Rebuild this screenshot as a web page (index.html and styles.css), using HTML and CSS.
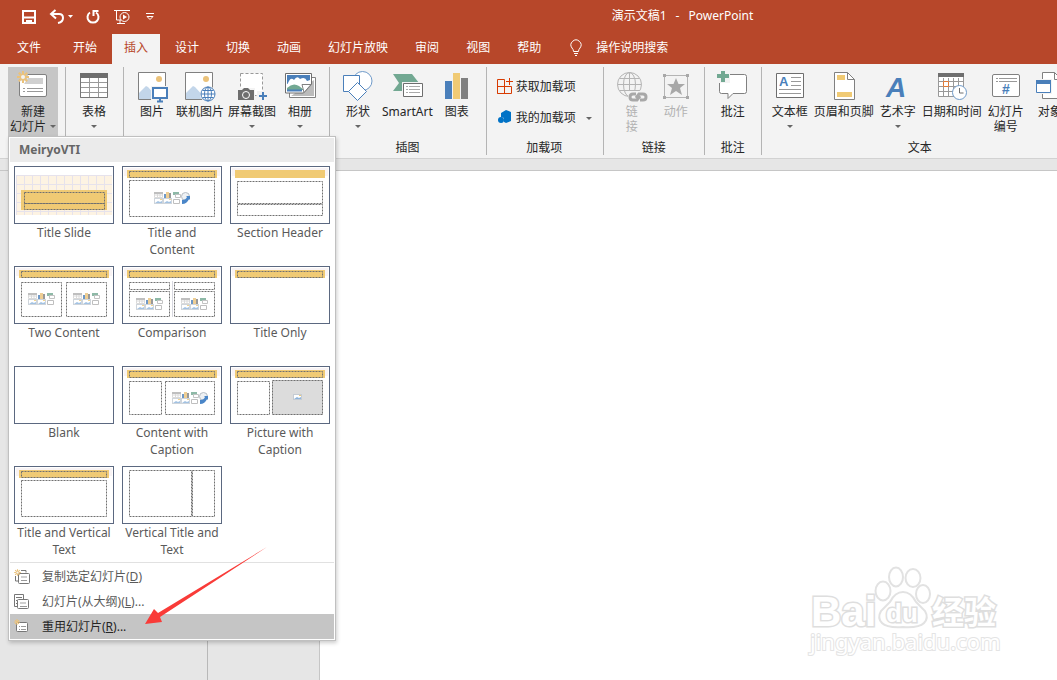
FILE: index.html
```html
<!DOCTYPE html>
<html lang="zh-CN">
<head>
<meta charset="utf-8">
<title>演示文稿1 - PowerPoint</title>
<link rel="stylesheet" href="styles.css">
</head>
<body>

<svg class="defs" width="0" height="0" aria-hidden="true">
	<defs>
		<pattern id="grid" width="8" height="9" patternUnits="userSpaceOnUse" x="2" y="9">
			<path d="M0 .5H8M.5 0V9" stroke="#e6e2ec" fill="none"/>
		</pattern>
		<g id="bar">
			<rect x="2" y="2" width="96" height="8" fill="#f8f3f4"/>
			<rect x="5" y="4" width="90" height="8" fill="#f0ca74"/>
		</g>
		<g id="bar-dots">
			<use href="#bar"/>
			<rect class="dot" x="7.500" y="5.500" width="85" height="6"/>
		</g>
		<g id="pic">
			<rect x=".5" y=".5" width="8" height="5" fill="#fff" stroke="#c4cbd3"/>
			<path d="M1 5l3-2 2 1 2-1v2z" fill="#8db4dc"/>
			<path d="M6 1h2v1H6z" fill="#f0ca74"/>
		</g>
		<g id="six" opacity=".8">
			<path d="M.5.5h8v5h-8zM.5 3h8M3.500 1v5M6 1v5" stroke="#d2d2d2" fill="#fff"/>
			<path d="M0 0h9v2H0z" fill="#b0b0b0"/>
			<path d="M10 2h2v4h-2z" fill="#4a7fba"/><path d="M12 0h3v6h-3z" fill="#ebc27a"/><path d="M15 1h2v5h-2z" fill="#808080"/>
			<path d="M19 0h6v3h-6z" fill="#72a892"/><path d="M21.500 2.500h5v3h-5z" stroke="#b5b5b5" fill="#fff"/>
			<use href="#pic" y="6"/><use href="#pic" x="9" y="6"/>
			<path d="M19.500 7.500h6v4h-6z" stroke="#b0b0b0" fill="#fff"/>
		</g>
		<g id="eight">
			<use href="#six"/>
			<circle cx="31.500" cy="4.500" r="4" stroke="#b5bcc4" fill="#eef1f4"/>
			<path d="M28 8q4 0 5-3l-1-1 4 0v4l-1-1q-2 5-7 5z" fill="#4a86c8"/>
		</g>
		<g id="sun">
			<path d="M0-6V6M-6 0H6M-4.200-4.200L4.200 4.200M-4.200 4.200L4.200-4.200" stroke="#ebc27a" stroke-width="2"/>
			<circle r="2" fill="#f3f3f3"/>
		</g>
		<g id="photo">
			<path d="M1.500 1.500h27v27h-27z" fill="#fff" stroke="#808080"/>
			<circle cx="22" cy="8" r="3" fill="#ebc27a"/>
			<path d="M2 22l7-7 2 1 11 12H2z" fill="#c3d6ea"/>
		</g>
	</defs>
</svg>

<div class="app">
	<header class="header">
		<div class="titlebar">
			<div class="quick">
				<button aria-label="保存"><svg width="16" height="16"><path d="M2 2h12v12H2zM2 8.500h12" fill="none" stroke="#fff" stroke-width="2"/><path d="M5 11h6v4H9v-2H7v2H5z" fill="#fff"/></svg></button>
				<button aria-label="撤消"><svg width="24" height="16"><path d="M2 5h8q4 0 4 4t-5 5M6.500 1L2 5l5 4.500" fill="none" stroke="#fff" stroke-width="2"/><path d="M19 6h5l-2.500 3z" fill="#fff"/></svg></button>
				<button aria-label="重复"><svg width="16" height="16"><path d="M5 3.500a5.500 5.500 0 1 0 6 0" fill="none" stroke="#fff" stroke-width="2"/><path d="M8.500 7V2h5" fill="none" stroke="#fff" stroke-width="2"/></svg></button>
				<button aria-label="从头开始"><svg width="20" height="16"><path d="M1 1.500h16M3.500 2v9H8M7 11v4M4 14.500h8" fill="none" stroke="#fff"/><circle cx="11.500" cy="8" r="4.500" fill="none" stroke="#fff"/><path d="M10 5.500l4 2.500-4 2.500z" fill="#fff"/></svg></button>
				<button aria-label="自定义快速访问工具栏"><svg width="10" height="16"><path d="M1 4.500h8M2 7.500h6l-3 3z" fill="none" stroke="#fff"/></svg></button>
			</div>
			<div class="doc-title"><span>演示文稿1</span><span>-</span><span>PowerPoint</span></div>
		</div>
		<nav class="tabs">
			<button class="tab file">文件</button>
			<button class="tab">开始</button>
			<button class="tab active">插入</button>
			<button class="tab">设计</button>
			<button class="tab">切换</button>
			<button class="tab">动画</button>
			<button class="tab">幻灯片放映</button>
			<button class="tab">审阅</button>
			<button class="tab">视图</button>
			<button class="tab">帮助</button>
			<button class="tab tell">
				<svg width="16" height="18"><path d="M5.500 12.500q0-2-1.500-3.500a5 5 0 1 1 8 0q-1.500 1.500-1.500 3.500zM6 14.500h4M7 16.500h2" fill="none" stroke="#fff"/></svg>
				操作说明搜索
			</button>
		</nav>
	</header>

	<div class="ribbon">
		<section class="group slides">
			<div class="tools">
				<button class="tool pressed">
					<svg width="32" height="32"><rect x="2.500" y="3.500" width="27" height="22" rx="1.500" fill="#fff" stroke="#808080"/><path d="M11 7h15v6H7z" fill="#d0d0d0"/><path d="M6 17.500h2m2 0h16M6 20.500h2m2 0h16" stroke="#999"/><circle cx="6" cy="5" r="5" fill="#c6c6c6"/><use href="#sun" x="6" y="6"/></svg>
					<span>新建<br>幻灯片<i class="caret side"></i></span>
				</button>
			</div>
		</section>
		<section class="group">
			<div class="tools">
				<button class="tool">
					<svg width="32" height="32"><path d="M2.500 2.500h27v24h-27zM3 11.500h26M3 16.500h26M3 21.500h26M11.500 7v19M20.500 7v19" fill="#fff" stroke="#999"/><path d="M2.500 2.500h27v24h-27z" fill="none" stroke="#777"/><path d="M2 2h28v5H2z" fill="#6e6e6e"/></svg>
					<span>表格</span><i class="caret"></i>
				</button>
			</div>
			<h2>表格</h2>
		</section>
		<section class="group">
			<div class="tools">
				<button class="tool">
					<svg width="32" height="32"><use href="#photo" x="1"/><path d="M15 15h17v15H15z" fill="#f3f3f3"/><path d="M17 17h14v10H17z" fill="#fff" stroke="#4a7fba" stroke-width="2"/><path d="M24 28v2M21 30.500h6" stroke="#4a7fba" stroke-width="2"/></svg>
					<span>图片</span>
				</button>
				<button class="tool">
					<svg width="32" height="32"><use href="#photo"/><circle cx="24" cy="23" r="8" fill="#f3f3f3"/><circle cx="24" cy="23" r="7" fill="#fff" stroke="#4a7fba"/><ellipse cx="24" cy="23" rx="3.500" ry="7" fill="none" stroke="#4a7fba"/><path d="M24 16v14M17 23h14M18.500 19.500h11M18.500 26.500h11" stroke="#4a7fba"/></svg>
					<span>联机图片</span>
				</button>
				<button class="tool">
					<svg width="32" height="32"><path d="M4.500 2.500h22v22h-22z" fill="#fff" stroke="#999" stroke-dasharray="3 2"/><path d="M1 17h18v13H1z" fill="#f3f3f3"/><path d="M2 19h4l2-2h4l2 2h4v10H2z" fill="#6e6e6e"/><circle cx="10" cy="24" r="3.500" fill="none" stroke="#fff"/><path d="M21 20h10v10H21z" fill="#f3f3f3"/><path d="M27 21v8M23 25h8" stroke="#4a7fba" stroke-width="2"/></svg>
					<span>屏幕截图</span><i class="caret"></i>
				</button>
				<button class="tool">
					<svg width="32" height="32"><path d="M5.500 6.500h26v20h-26z" fill="#fff" stroke="#808080"/><path d="M7 25l23-16v16z" fill="#bbb"/><path d="M1.500 2.500h26v11l-8 8.500h-18z" fill="#fff" stroke="#6e6e6e"/><path d="M3 4h23v9H3z" fill="#4a7fba"/><path d="M5 10q2-4 5-1 3-5 6-1 5-3 7 2l3-1v5H3z" fill="#fff"/><path d="M3 17q6-6 12-2l5 4H3z" fill="#72a892"/><path d="M3 19.500h15" stroke="#4a7fba" stroke-width="2"/><path d="M27 13.500h-9l2 8z" fill="#fff" stroke="#808080"/></svg>
					<span>相册</span><i class="caret"></i>
				</button>
			</div>
			<h2>图像</h2>
		</section>
		<section class="group">
			<div class="tools">
				<button class="tool">
					<svg width="32" height="32"><circle cx="20.500" cy="10" r="9.500" fill="#fff" stroke="#6f9ac9"/><path d="M1.500 4.500h16v16h-16z" fill="#fff" stroke="#4a7fba"/><path d="M15.500 11.500l9 9-9 9-9-9z" fill="#fff" stroke="#4a7fba"/></svg>
					<span>形状</span><i class="caret"></i>
				</button>
				<button class="tool">
					<svg width="32" height="32"><path d="M2 3h19l7 9-7 8H2l6-8z" fill="#72a892"/><path d="M11 11h21v16H11z" fill="#f3f3f3"/><path d="M12.500 12.500h19v13h-19z" fill="#fff" stroke="#6e6e6e"/><path d="M15 15.500h2m1 0h11M15 18.500h2m1 0h11M15 21.500h2m1 0h11" stroke="#aaa"/></svg>
					<span>SmartArt</span>
				</button>
				<button class="tool">
					<svg width="32" height="32"><path d="M4 10h7v18H4z" fill="#4a7fba"/><path d="M12 2h7v26h-7z" fill="#f0ca74"/><path d="M20 7h7v21h-7z" fill="#808080"/></svg>
					<span>图表</span>
				</button>
			</div>
			<h2>插图</h2>
		</section>
		<section class="group">
			<div class="tools stack">
				<button class="row-tool">
					<svg width="16" height="16"><path d="M.5 1.500h7v14h-7zM.5 8.500h14v7H.5M7.500 8.500v7M12.500 0v7M9 3.500h7" fill="none" stroke="#d83b01"/></svg>
					获取加载项
				</button>
				<button class="row-tool">
					<svg width="16" height="16"><path d="M9 1l5 2v9l-5 2-2-1V9L4 8V4z" fill="#0072c6"/><circle cx="4" cy="11" r="3" fill="#0072c6"/></svg>
					我的加载项<i class="caret"></i>
				</button>
			</div>
			<h2>加载项</h2>
		</section>
		<section class="group narrow">
			<div class="tools">
				<button class="tool" disabled>
					<svg width="32" height="32"><g fill="none" stroke="#b4b4b4"><circle cx="13.500" cy="13.500" r="12"/><ellipse cx="13.500" cy="13.500" rx="6" ry="12"/><path d="M13.500 1.500v24M1.500 13.500h24M3.500 7.500h20M3.500 19.500h20"/></g><path d="M12 20h20v12H12z" fill="#f3f3f3"/><g fill="none" stroke="#a8a8a8" stroke-width="3"><path d="M20 23h-3q-3 0-3 3t3 3h4l3-4"/><path d="M24 29h3q3 0 3-3t-3-3h-4l-3 4"/></g></svg>
					<span>链<br>接</span>
				</button>
				<button class="tool" disabled>
					<svg width="32" height="32"><path d="M4.500 4.500h23v22h-23z" fill="none" stroke="#b4b4b4"/><path d="M3 3h3v3H3zM26 3h3v3h-3zM3 25h3v3H3zM26 25h3v3h-3zM16 7l2.500 6H25l-5 4 2 7-6-4-6 4 2-7-5-4h6.500z" fill="#a8a8a8"/></svg>
					<span>动作</span>
				</button>
			</div>
			<h2>链接</h2>
		</section>
		<section class="group narrow">
			<div class="tools">
				<button class="tool">
					<svg width="32" height="32"><path d="M4.500 3.500h23q2 0 2 2v15q0 2-2 2H16l-5 5v-5H4.500q-2 0-2-2v-15q0-2 2-2z" fill="#fff" stroke="#808080"/><path d="M0-2h13v14H0z" fill="#f3f3f3"/><path d="M6-1v12M0 5h12" stroke="#72a892" stroke-width="4"/></svg>
					<span>批注</span>
				</button>
			</div>
			<h2>批注</h2>
		</section>
		<section class="group text">
			<div class="tools">
				<button class="tool">
					<svg width="32" height="32"><path d="M2.500 2.500h27v24h-27z" fill="#fff" stroke="#6e6e6e"/><path d="M17 6.500h10M17 10.500h10M17 14.500h10M5 18.500h22M5 22.500h22" stroke="#999"/><text class="glyph" x="5" y="15" font-size="13">A</text></svg>
					<span>文本框</span><i class="caret"></i>
				</button>
				<button class="tool">
					<svg width="32" height="32"><path d="M6.500 1.500h13l7 7v20h-20z" fill="#fff" stroke="#808080"/><path d="M19.500 1.500v7h7" fill="none" stroke="#808080"/><path d="M9 4h8v5H9zM9 21h15v5H9z" fill="#f0ca74"/></svg>
					<span>页眉和页脚</span>
				</button>
				<button class="tool">
					<svg width="32" height="32"><text class="glyph slant" x="4" y="26" font-size="28">A</text></svg>
					<span>艺术字</span><i class="caret"></i>
				</button>
				<button class="tool">
					<svg width="32" height="32"><path d="M2.500 2.500h25v23h-25zM3 10.500h24M3 15.500h24M3 20.500h24M7.500 7v18M12.500 7v18M17.500 7v18M22.500 7v18" fill="#fff" stroke="#999"/><path d="M2 2h26v4H2z" fill="#6e6e6e"/><path d="M7.500 10.500h5v5h-5z" fill="#fff" stroke="#e07b39"/><circle cx="23.500" cy="21.500" r="7" fill="#fff" stroke="#6f9ac9"/><path d="M23.500 17v5h4" fill="none" stroke="#6e6e6e"/></svg>
					<span>日期和时间</span>
				</button>
				<button class="tool">
					<svg width="32" height="32"><rect x="2.500" y="3.500" width="27" height="22" rx="1.500" fill="#fff" stroke="#808080"/><path d="M6 7.500h2m1 0h18M6 10.500h2m1 0h18" stroke="#999"/><text class="glyph" x="12" y="23" font-size="14">#</text></svg>
					<span>幻灯片<br>编号</span>
				</button>
				<button class="tool">
					<svg width="32" height="32"><path d="M8.500 1.500h12l7 7v19h-19z" fill="#fff" stroke="#808080"/><path d="M20.500 1.500v7h7" fill="none" stroke="#808080"/><path d="M1 8h17v15H1z" fill="#f3f3f3"/><path d="M2.500 9.500h14v12h-14z" fill="#fff" stroke="#4a7fba"/><path d="M2 9h15v4H2z" fill="#4a7fba"/></svg>
					<span>对象</span>
				</button>
			</div>
			<h2>文本</h2>
		</section>
	</div>

	<main class="work">
		<div class="outline"></div>
		<div class="gutter"></div>
		<div class="slide">
			<svg class="watermark" width="200" height="100" role="img" aria-label="Baidu 经验">
				<g class="wm">
					<text class="wm-logo" x="4" y="62" font-size="42">Bai</text>
					<ellipse cx="76" cy="27" rx="7.500" ry="9.500"/>
					<ellipse cx="89" cy="13" rx="7" ry="9.500"/>
					<ellipse cx="106" cy="14" rx="7.500" ry="9"/>
					<ellipse cx="116" cy="30" rx="7" ry="9"/>
					<path d="M96 28q8 0 13 10l9 9q4 7-1 12t-21 4q-16 1-21-4t-1-12l9-9q5-10 13-10z"/>
					<text class="wm-logo" x="79" y="58" font-size="26">du</text>
					<text class="wm-cjk" x="125" y="60" font-size="32">经验</text>
					<text class="wm-url" x="3" y="86" font-size="22">jingyan.baidu.com</text>
				</g>
			</svg>
		</div>
	</main>

	<div class="menu">
		<h3>MeiryoVTI</h3>
		<div class="layouts">
			<button class="layout">
				<svg width="100" height="58"><rect x="2" y="9" width="96" height="40" fill="#fdf3e3"/><rect x="2" y="9" width="96" height="40" fill="url(#grid)"/><rect x="7" y="24" width="86" height="20" fill="#f0ca74"/><rect class="dot" x="10.500" y="26.500" width="80" height="11"/><rect class="dot" x="10.500" y="37.500" width="80" height="6"/></svg>
				<span>Title Slide</span>
			</button>
			<button class="layout">
				<svg width="100" height="58"><use href="#bar-dots"/><rect class="dot" x="7.500" y="14.500" width="85" height="36"/><use href="#eight" x="32" y="26"/></svg>
				<span>Title and Content</span>
			</button>
			<button class="layout">
				<svg width="100" height="58"><use href="#bar"/><rect class="dot" x="7.500" y="15.500" width="85" height="22"/><rect class="dot" x="7.500" y="38.500" width="85" height="11"/></svg>
				<span>Section Header</span>
			</button>
			<button class="layout">
				<svg width="100" height="58"><use href="#bar-dots"/><rect class="dot" x="7.500" y="16.500" width="40" height="34"/><rect class="dot" x="52.500" y="16.500" width="40" height="34"/><use href="#six" x="14" y="27"/><use href="#six" x="59" y="27"/></svg>
				<span>Two Content</span>
			</button>
			<button class="layout">
				<svg width="100" height="58"><use href="#bar-dots"/><path d="M50.500 15v36" stroke="#d8d8e0"/><rect class="dot" x="7.500" y="16.500" width="40" height="7"/><rect class="dot" x="52.500" y="16.500" width="40" height="7"/><rect class="dot" x="7.500" y="25.500" width="40" height="25"/><rect class="dot" x="52.500" y="25.500" width="40" height="25"/><use href="#six" x="14" y="32"/><use href="#six" x="59" y="32"/></svg>
				<span>Comparison</span>
			</button>
			<button class="layout">
				<svg width="100" height="58"><use href="#bar-dots"/></svg>
				<span>Title Only</span>
			</button>
			<button class="layout">
				<svg width="100" height="58"></svg>
				<span>Blank</span>
			</button>
			<button class="layout">
				<svg width="100" height="58"><use href="#bar-dots"/><rect class="dot" x="7.500" y="15.500" width="32" height="33"/><rect class="dot" x="43.500" y="15.500" width="49" height="33"/><use href="#eight" x="50" y="26"/></svg>
				<span>Content with Caption</span>
			</button>
			<button class="layout">
				<svg width="100" height="58"><use href="#bar-dots"/><rect class="dot" x="7.500" y="15.500" width="32" height="33"/><rect x="42" y="14" width="51" height="35" fill="#dcdcdc"/><rect class="dot" x="42.500" y="14.500" width="50" height="34"/><use href="#pic" x="63" y="28"/></svg>
				<span>Picture with Caption</span>
			</button>
			<button class="layout">
				<svg width="100" height="58"><use href="#bar-dots"/><rect class="dot" x="7.500" y="14.500" width="85" height="36"/></svg>
				<span>Title and Vertical Text</span>
			</button>
			<button class="layout">
				<svg width="100" height="58"><rect class="dot" x="7.500" y="4.500" width="62" height="46"/><rect class="dot" x="70.500" y="4.500" width="22" height="46"/></svg>
				<span>Vertical Title and Text</span>
			</button>
		</div>
		<div class="commands">
			<button class="command">
				<svg width="16" height="16"><path d="M7 1.500h5v2M1.500 7v5H4" fill="none" stroke="#777"/><rect x="4.500" y="4.500" width="11" height="10" rx="1" fill="#fff" stroke="#777"/><path d="M7 7h6v2H7z" fill="#d0d0d0"/><path d="M7 11.500h6" stroke="#999"/><use href="#sun" transform="translate(3.500 3.500) scale(.55)"/></svg>
				<span>复制选定幻灯片(<u>D</u>)</span>
			</button>
			<button class="command">
				<svg width="16" height="16"><path d="M.5.500h9v12h-9zM2 3.500h6M2 6.500h2M2 9.500h2" fill="#fff" stroke="#777"/><rect x="3.500" y="5.500" width="11" height="9" rx="1" fill="#fff" stroke="#777"/><path d="M6 8h6v2H6z" fill="#d0d0d0"/><path d="M6 12.500h7" stroke="#999"/></svg>
				<span>幻灯片(从大纲)(<u>L</u>)...</span>
			</button>
			<button class="command hover">
				<svg width="16" height="16"><rect x="2.500" y="3.500" width="11" height="9" rx="1" fill="#fff" stroke="#777"/><path d="M5 7.500h1m1 0h5M5 10.500h1m1 0h5" stroke="#999"/><path d="M3 0v6M0 3h6M1 1l4 4M1 5l4-4" stroke="#ebc27a"/></svg>
				<span>重用幻灯片(<u>R</u>)...</span>
			</button>
		</div>
	</div>

	<svg class="arrow" width="124" height="80" aria-hidden="true"><path d="M122 0L13 66 9 62 0 77l17-2-2-5z" fill="#f93b38"/></svg>
</div>

</body>
</html>
```

FILE: styles.css
```css
html, body {
	margin: 0;
	height: 100%;
	overflow: hidden;
	font: 12px/15px "Noto Sans", "Noto Sans CJK SC", sans-serif;
	color: #262626;
}
button {
	margin: 0;
	padding: 0;
	border: 0;
	background: none;
	font: inherit;
	color: inherit;
}
svg {
	display: block;
	flex: none;
}
.defs {
	position: absolute;
}
.app {
	position: relative;
	display: flex;
	flex-direction: column;
	height: 100%;
	overflow: hidden;
	background: #e6e6e6;
}

/* title bar and tabs */
.header {
	background: #b7472a;
	color: #fff;
}
.titlebar {
	display: flex;
	align-items: center;
	height: 34px;
}
.quick {
	display: flex;
	align-items: center;
	gap: 12px;
	box-sizing: border-box;
	width: 308px;
	padding-left: 21px;
}
.doc-title {
	display: flex;
	flex: 1;
	justify-content: center;
	gap: 9px;
	padding-bottom: 4px;
}
.tabs {
	display: flex;
	gap: 3px;
	height: 30px;
}
.tab {
	padding: 0 12px 3px;
	white-space: nowrap;
}
.tab.file {
	padding: 0 17px 3px;
}
.tab.active {
	background: #f3f3f3;
	color: #b7472a;
}
.tab.tell {
	display: flex;
	align-items: center;
	gap: 12px;
}

/* ribbon */
.ribbon {
	display: flex;
	height: 94px;
	overflow: hidden;
	background: #f3f3f3;
	border-bottom: 1px solid #d2d2d2;
}
.group {
	display: flex;
	flex-direction: column;
	flex: none;
	justify-content: space-between;
	height: 91px;
	padding: 3px 7px 0 6px;
	box-sizing: border-box;
	border-right: 1px solid #b4b4b4;
	border-image: linear-gradient(transparent 4px, #b4b4b4 4px, #b4b4b4 90px, transparent 90px) 1;
}
.group.slides {
	padding: 3px 7px 0 8px;
}
.group.narrow {
	padding: 3px 6px 0;
}
.group.text {
	border: 0;
}
.group h2 {
	margin: 0;
	font-size: 12px;
	font-weight: normal;
	line-height: 15px;
	text-align: center;
}
.tools {
	display: flex;
}
.tool {
	display: flex;
	flex-direction: column;
	align-items: center;
	flex: none;
	box-sizing: border-box;
	min-width: 44px;
	height: 69px;
	padding: 4px 2px 0;
	white-space: nowrap;
}
.tool span {
	margin-top: 1px;
}
.tool.pressed {
	width: 50px;
	background: #c6c6c6;
}
.tool:disabled {
	color: #b1b1b1;
}
.caret {
	width: 0;
	border: 3px solid transparent;
	border-top-color: #666;
	border-bottom: 0;
	margin-top: 6px;
}
.caret.side {
	display: inline-block;
	margin: 0 0 3px 4px;
}
.tools.stack {
	flex-direction: column;
	gap: 15px;
	padding: 11px 4px 0;
}
.row-tool {
	display: flex;
	align-items: center;
	gap: 3px;
}
.row-tool .caret {
	margin: 2px 0 0 7px;
}
.glyph {
	font-family: "Liberation Sans", sans-serif;
	font-weight: bold;
	fill: #4a7fba;
}
.slant {
	font-style: italic;
}

/* editing area */
.work {
	display: flex;
	flex: 1;
	margin-top: 11px;
	border-top: 1px solid #c6c6c6;
}
.outline {
	width: 207px;
	border-right: 1px solid #b8b8b8;
}
.gutter {
	width: 111px;
	border-right: 1px solid #c6c6c6;
}
.slide {
	position: relative;
	flex: 1;
	background: #fff;
}
.watermark {
	position: absolute;
	right: 50px;
	bottom: 16px;
	overflow: visible;
}
.wm {
	fill: #fff;
	stroke: #e2e2e2;
	stroke-width: 2px;
}
.wm text {
	paint-order: stroke;
	stroke: #dedede;
	stroke-width: 3px;
}
.wm-logo {
	font-family: "Liberation Sans", sans-serif;
	font-weight: bold;
}
.wm-cjk {
	font-family: "Noto Sans CJK SC", sans-serif;
	font-weight: bold;
}
.wm .wm-url {
	font-family: "Noto Sans", sans-serif;
	stroke: #e4e4e4;
	stroke-width: 2px;
}

/* new slide menu */
.menu {
	position: absolute;
	top: 136px;
	left: 8px;
	box-sizing: border-box;
	width: 328px;
	padding: 1px;
	background: #fff;
	border: 1px solid #c0c0c0;
	box-shadow: 1px 2px 4px rgba(0, 0, 0, 0.2);
	color: #5a5a5a;
}
.menu h3 {
	margin: 0;
	padding: 0 9px;
	font-size: 12px;
	line-height: 24px;
	background: #ebebeb;
	color: #666;
}
.layouts {
	display: grid;
	grid-template-columns: repeat(3, 100px);
	grid-auto-rows: 100px;
	column-gap: 8px;
	padding: 4px 4px 0;
	border-bottom: 1px solid #e1e1e1;
	height: 396px;
}
.layout {
	display: flex;
	flex-direction: column;
	align-items: center;
	font-size: 12px;
	line-height: 17px;
}
.layout span {
	padding: 0 2px;
}
.layout svg {
	outline: 1px solid #5b6880;
	outline-offset: -1px;
}
.dot {
	fill: none;
	stroke: #707070;
	stroke-dasharray: 2 1;
}
.commands {
	padding-top: 1px;
}
.command {
	display: flex;
	align-items: center;
	gap: 12px;
	width: 100%;
	height: 25px;
	padding-left: 4px;
}
.command.hover {
	background: #c5c5c5;
	color: #262626;
}
.arrow {
	position: absolute;
	top: 547px;
	left: 145px;
}
```
